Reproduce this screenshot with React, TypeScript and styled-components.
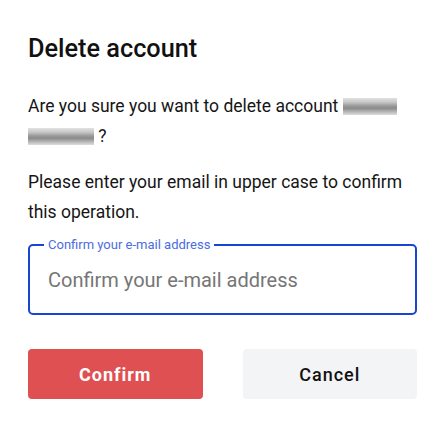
import React from "react";
import styled, { createGlobalStyle } from "styled-components";

const Global = createGlobalStyle`
  html, body { margin: 0; padding: 0; background: #fff; }
  body { font-family: Roboto, "Noto Sans", sans-serif; color: #111; }
  * { box-sizing: border-box; }
`;

const Dialog = styled.div`
  width: 445px;
  padding: 33px 28px 28px 28px;
  display: flex;
  flex-direction: column;
`;

const Title = styled.h2`
  margin: 0;
  font-size: 25.3px;
  font-weight: 500;
  line-height: 32px;
  color: #111;
`;

const Paragraph = styled.p<{ $mt: number }>`
  margin: ${(p) => p.$mt}px 0 0 0;
  font-size: 17.5px;
  line-height: 30px;
  color: #151515;
`;

const Redacted = styled.span<{ $w: number }>`
  display: inline-block;
  width: ${(p) => p.$w}px;
  height: 17px;
  vertical-align: -3px;
  background: linear-gradient(180deg, #e2e2e2 0%, #c6c6c6 25%, #9c9c9c 45%, #8a8a8a 60%, #b4b4b4 80%, #dedede 100%);
`;

const Field = styled.div`
  position: relative;
  margin-top: 17px;
  height: 71px;
  border: 2px solid #1746d0;
  border-radius: 5px;
  display: flex;
  align-items: center;
  padding: 0 18px;
`;

const FloatingLabel = styled.label`
  position: absolute;
  top: -9px;
  left: 14px;
  padding: 0 4px;
  background: #fff;
  font-size: 13px;
  line-height: 15px;
  color: #4a6ee0;
`;

const Input = styled.input`
  border: none;
  outline: none;
  width: 100%;
  font-family: Roboto, sans-serif;
  font-size: 20px;
  color: #222;
  padding: 0;
  caret-color: #1746d0;
  &::placeholder { color: #767676; }
`;

const Actions = styled.div`
  margin-top: 34px;
  display: grid;
  grid-template-columns: 1fr 1fr;
  column-gap: 40px;
`;

const Button = styled.button<{ $variant: "danger" | "neutral" }>`
  height: 50px;
  border: none;
  border-radius: 4px;
  font-family: Roboto, sans-serif;
  font-size: 18px;
  letter-spacing: 1px;
  font-weight: ${(p) => (p.$variant === "danger" ? 700 : 500)};
  background: ${(p) => (p.$variant === "danger" ? "#df5052" : "#f3f4f6")};
  color: ${(p) => (p.$variant === "danger" ? "#fff" : "#111")};
`;

export default function App() {
  return (
    <>
      <Global />
      <Dialog>
        <Title>Delete account</Title>
        <Paragraph $mt={26}>
          Are you sure you want to delete account <Redacted $w={54} />
          <br />
          <Redacted $w={66} /> ?
        </Paragraph>
        <Paragraph $mt={16}>
          Please enter your email in upper case to confirm this operation.
        </Paragraph>
        <Field>
          <FloatingLabel htmlFor="confirm-email">Confirm your e-mail address</FloatingLabel>
          <Input id="confirm-email" autoFocus placeholder="Confirm your e-mail address" />
        </Field>
        <Actions>
          <Button $variant="danger">Confirm</Button>
          <Button $variant="neutral">Cancel</Button>
        </Actions>
      </Dialog>
    </>
  );
}
